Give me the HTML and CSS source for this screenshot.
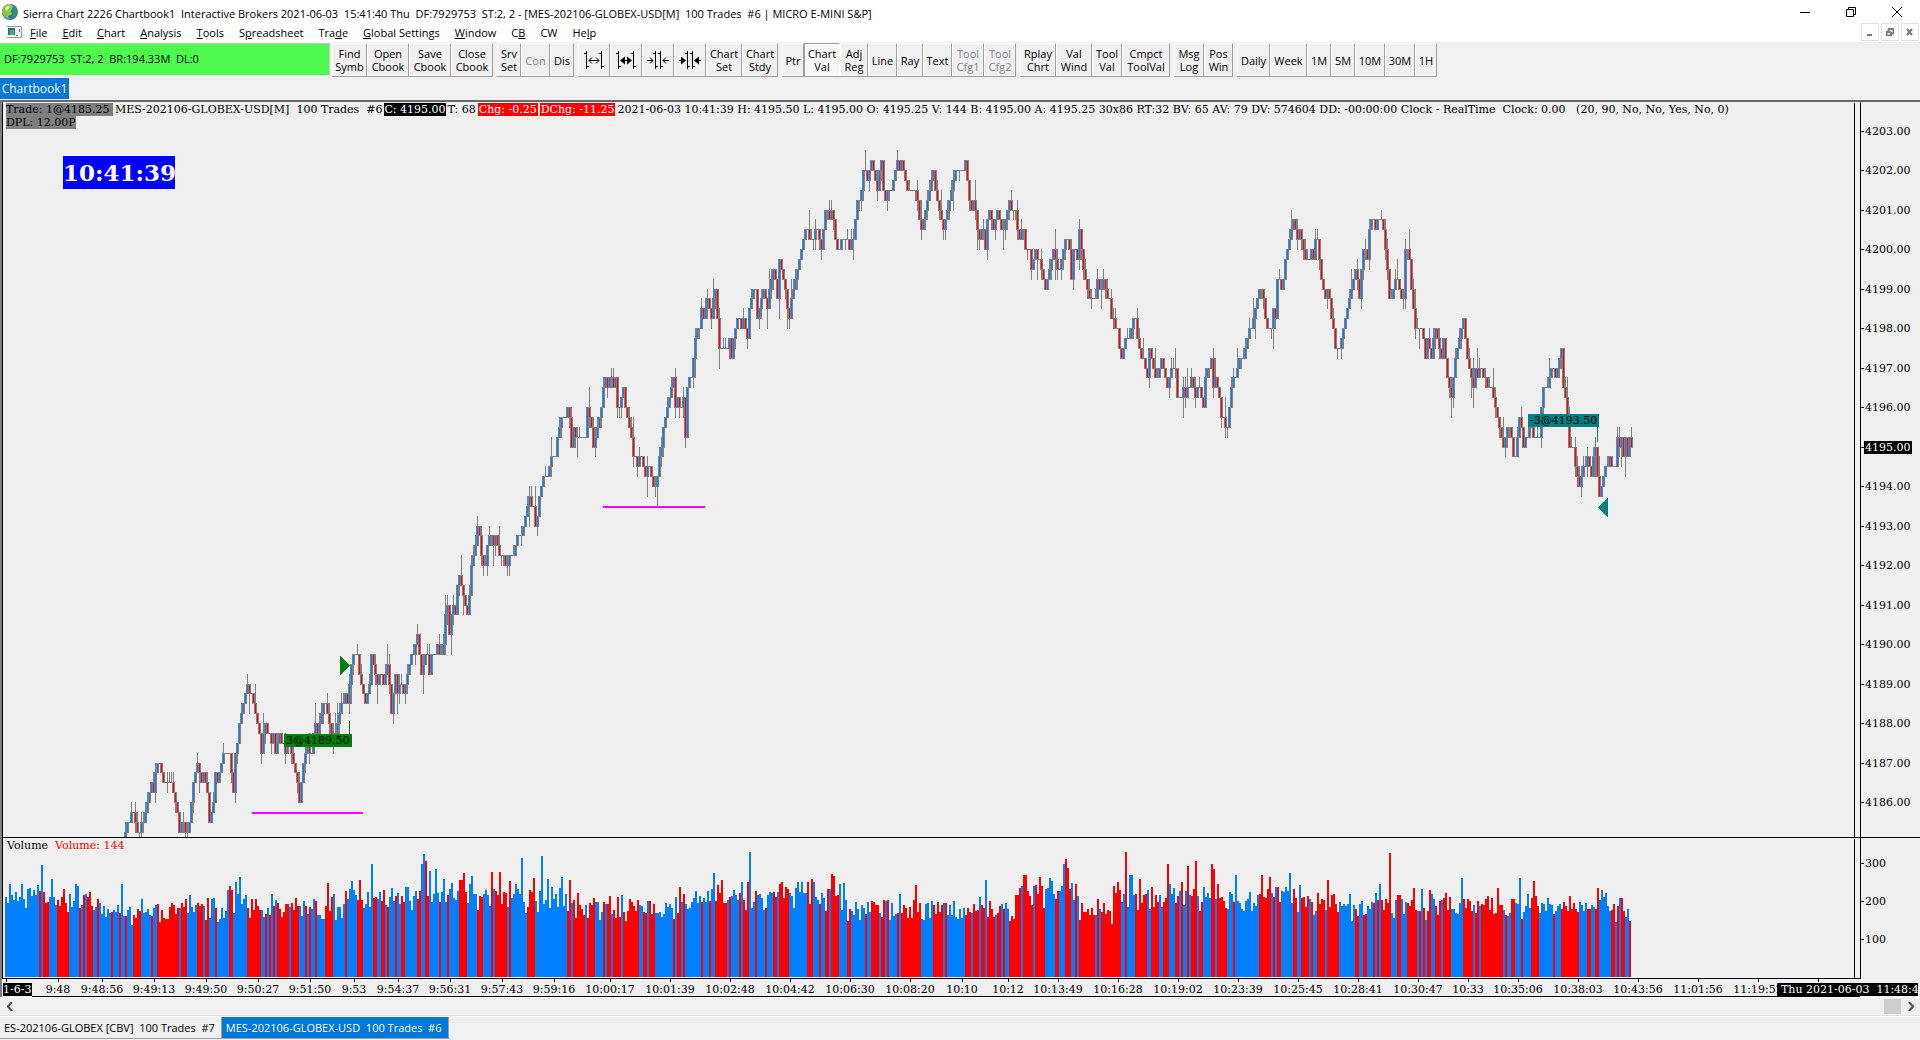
FILE: index.html
```html
<!DOCTYPE html>
<html lang="en">
<head>
  <meta charset="UTF-8" />
  <meta name="viewport" content="width=device-width, initial-scale=1.0"/>
  <title>Sierra Chart</title>
  <link rel="stylesheet" href="styles.css">
</head>
<body>
  <header class="titlebar">
    <svg class="app-icon" width="16" height="18" viewBox="0 0 16 18">
      <circle cx="8" cy="9" r="8" fill="#2d78b8"/>
      <path d="M1 6Q3 1 9 1L11 4 9 8 10 11 6 13 7 16Q1 14 0 9Z" fill="#8fc63d"/>
      <path d="M3 5Q5 2 8 3L7 6 4 8Z" fill="#e4f0a0"/>
      <path d="M12 3Q16 6 15 11L12 15 11 11 13 8Z" fill="#3c9a4b"/>
    </svg>
    <span class="title">Sierra Chart 2226 Chartbook1&nbsp; Interactive Brokers 2021-06-03&nbsp; 15:41:40 Thu&nbsp; DF:7929753&nbsp; ST:2, 2 - [MES-202106-GLOBEX-USD[M]&nbsp; 100 Trades&nbsp; #6 | MICRO E-MINI S&amp;P]</span>
    <div class="win-buttons">
      <button aria-label="Minimize"><svg width="10" height="10"><path d="M0 5.5H10"/></svg></button>
      <button aria-label="Restore"><svg width="10" height="10"><path d="M.5 2.5H7.5V9.500H.5ZM2.500 2.500V.5H9.500V7.500H7.500"/></svg></button>
      <button aria-label="Close"><svg width="10" height="10"><path d="M0 0L10 10M10 0L0 10"/></svg></button>
    </div>
  </header>

  <nav class="menubar">
    <svg class="doc-icon" width="15" height="12" viewBox="0 0 15 12">
      <path d="M0 .5H14.500V11.500H0" fill="#f4f4f4" stroke="#999"/>
      <path d="M1 2H8V9H1Z" fill="#2f6f8c"/><path d="M3 4H7V9H3Z" fill="#5fa463"/>
      <path d="M9 9.500H11M12.500 3V6" stroke="#567"/>
    </svg>
    <button><u>F</u>ile</button>
    <button><u>E</u>dit</button>
    <button><u>C</u>hart</button>
    <button><u>A</u>nalysis</button>
    <button><u>T</u>ools</button>
    <button>S<u>p</u>readsheet</button>
    <button>Tra<u>d</u>e</button>
    <button><u>G</u>lobal Settings</button>
    <button><u>W</u>indow</button>
    <button>C<u>B</u></button>
    <button>CW</button>
    <button>He<u>l</u>p</button>
    <div class="mdi-buttons">
      <button aria-label="Minimize chart"><svg width="8" height="8"><path d="M1 7H6"/></svg></button>
      <button aria-label="Restore chart"><svg width="8" height="8"><path d="M0 4H5M.5 4V7.500H5V4M2 1H8M2.500 1V3M7.500 1V5.500H6"/></svg></button>
      <button aria-label="Close chart"><svg width="8" height="8"><path d="M1 1L6 7M6 1L1 7"/></svg></button>
    </div>
  </nav>

  <div class="toolbar">
    <div class="status">DF:7929753&nbsp; ST:2, 2&nbsp; BR:194.33M&nbsp; DL:0</div>
    <div class="group group-file">
      <button>Find<br>Symb</button><button>Open<br>Cbook</button><button>Save<br>Cbook</button><button>Close<br>Cbook</button>
    </div>
    <div class="group group-server">
      <button>Srv<br>Set</button><button disabled>Con</button><button>Dis</button>
    </div>
    <div class="group group-chart">
      <button aria-label="Increase spacing"><svg width="20" height="20"><path d="M2.500 1V19M0 3.500H2M3 16.500H5M17.500 1V19M15 3.500H17M18 16.500H20M5 10.500H15M8 7.500L5 10.500 8 13.500M12 7.500L15 10.500 12 13.500"/></svg></button>
      <button aria-label="Increase bar width"><svg width="20" height="20"><path d="M2.500 1V19M0 3.500H2M3 16.500H5M17.500 1V19M15 3.500H17M18 16.500H20M5 10.500H15"/><path class="fill" d="M4 10.500L9 6.500V14.500ZM16 10.500L11 6.500V14.500Z"/></svg></button>
      <button aria-label="Decrease spacing"><svg width="22" height="20"><path d="M8.500 1V19M6 3.500H8M9 16.500H11M13.500 1V19M11 3.500H13M14 16.500H16M0 10.500H6M3 7.500L6 10.500 3 13.500M16 10.500H22M19 7.500L16 10.500 19 13.500"/></svg></button>
      <button aria-label="Decrease bar width"><svg width="22" height="20"><path d="M8.500 1V19M6 3.500H8M9 16.500H11M13.500 1V19M11 3.500H13M14 16.500H16M0 10.500H6M16 10.500H22"/><path class="fill" d="M7 10.500L2 6.500V14.500ZM15 10.500L20 6.500V14.500Z"/></svg></button>
      <button>Chart<br>Set</button><button>Chart<br>Stdy</button>
    </div>
    <div class="group group-tools">
      <button>Ptr</button><button class="pressed">Chart<br>Val</button><button>Adj<br>Reg</button><button>Line</button><button>Ray</button><button>Text</button><button disabled>Tool<br>Cfg1</button><button disabled>Tool<br>Cfg2</button>
    </div>
    <div class="group group-windows">
      <button>Rplay<br>Chrt</button><button>Val<br>Wind</button><button>Tool<br>Val</button><button>Cmpct<br>ToolVal</button>
    </div>
    <div class="group group-log">
      <button>Msg<br>Log</button><button>Pos<br>Win</button>
    </div>
    <div class="group group-period">
      <button>Daily</button><button>Week</button><button>1M</button><button>5M</button><button>10M</button><button>30M</button><button>1H</button>
    </div>
  </div>

  <div class="book-tabs"><button class="active">Chartbook1</button></div>

  <main class="chart">
    <div class="plot">
      <svg id="pricePlot"></svg>
      <div class="info">
        <span class="pos">Trade: 1@4185.25&nbsp;</span>
        <span class="symbol">MES-202106-GLOBEX-USD[M]&nbsp; 100 Trades&nbsp; #6</span>
        <span class="last">C: 4195.00</span>
        <span class="ticks">T: 68</span>
        <span class="chg">Chg: -0.25</span>
        <span class="dchg">DChg: -11.25</span>
        <span class="rest">2021-06-03 10:41:39 H: 4195.50 L: 4195.00 O: 4195.25 V: 144 B: 4195.00 A: 4195.25 30x86 RT:32 BV: 65 AV: 79 DV: 574604 DD: -00:00:00 Clock - RealTime&nbsp; Clock: 0.00&nbsp;&nbsp; (20, 90, No, No, Yes, No, 0)</span>
      </div>
      <div class="dpl">DPL: 12.00P</div>
      <div class="clock">10:41:39</div>
      <div class="fill-label buy">3@4189.50</div>
      <div class="fill-label sell">-3@4193.50</div>
    </div>
    <div class="scale"><svg id="priceScale"></svg><div class="price-now">4195.00</div></div>
    <div class="volume">
      <svg id="volumePlot"></svg>
      <div class="volume-title">Volume&nbsp; <span>Volume: 144</span></div>
    </div>
    <div class="scale volume-scale"><svg id="volumeScale"></svg></div>
    <div class="times">
      <svg id="timeScale"></svg>
      <div class="date-left">1-6-3</div>
      <div class="date-right">Thu 2021-06-03&nbsp; 11:48:4</div>
    </div>
  </main>

  <div class="scrollbar">
    <button aria-label="Scroll left"><svg width="6" height="9"><path d="M5 0L1 4.500 5 9"/></svg></button>
    <div class="track"><div class="thumb"></div></div>
    <button aria-label="Scroll right"><svg width="6" height="9"><path d="M1 0L5 4.500 1 9"/></svg></button>
  </div>

  <footer class="chart-tabs">
    <button>ES-202106-GLOBEX [CBV]&nbsp; 100 Trades&nbsp; #7</button>
    <button class="active">MES-202106-GLOBEX-USD&nbsp; 100 Trades&nbsp; #6</button>
  </footer>

  <script src="chart.js"></script>
</body>
</html>
```
FILE: styles.css
```css
* {
  box-sizing: border-box;
}

body {
  margin: 0;
  height: 100vh;
  display: flex;
  flex-direction: column;
  overflow: hidden;
  background: #f0f0f0;
  color: #000;
  font-family: "Open Sans", "Noto Sans", sans-serif;
  font-size: 12px;
}

button {
  margin: 0;
  padding: 0;
  border: 0;
  background: none;
  color: inherit;
  font: inherit;
  white-space: nowrap;
}

svg {
  display: block;
  fill: none;
  stroke: #000;
}

/* title and menu */
.titlebar {
  display: flex;
  align-items: center;
  height: 22px;
  padding: 2px 0 0 2px;
  background: #fff;
}

.app-icon,
.doc-icon {
  flex: none;
  stroke: none;
}

.title {
  margin-left: 5px;
  padding-top: 2px;
  font-size: 11px;
  white-space: nowrap;
}

.win-buttons {
  display: flex;
  margin-left: auto;
}

.win-buttons button {
  display: grid;
  place-items: center;
  width: 46px;
  height: 20px;
}

.menubar {
  display: flex;
  align-items: center;
  height: 20px;
  padding-left: 7px;
  background: #fff;
  font-size: 11px;
}

.menubar > button {
  padding: 1px 8px 0 7px;
  line-height: 19px;
}

.doc-icon {
  margin-right: 1px;
}

.mdi-buttons {
  display: flex;
  gap: 2px;
  margin-left: auto;
  padding-right: 1px;
}

.mdi-buttons button {
  display: grid;
  place-items: center;
  width: 18px;
  height: 18px;
  border: 1px solid #e3e3e3;
}

.mdi-buttons svg {
  stroke: #6f7f8f;
  stroke-width: 2;
}

/* toolbar */
.toolbar {
  display: flex;
  flex: none;
  gap: 4px;
  height: 36px;
  padding-top: 1px;
  font-size: 11px;
  line-height: 13px;
}

.status {
  width: 330px;
  height: 32px;
  margin-right: -2px;
  padding-left: 4px;
  border: 1px solid #c8c8c8;
  border-width: 1px 1px 0 0;
  background: #4dfa4d;
  line-height: 30px;
}

.group {
  display: grid;
  height: 34px;
  border-bottom: 1px solid #a0a0a0;
}

.group button {
  display: grid;
  place-content: center;
  border-top: 1px solid #fff;
  border-left: 1px solid #fff;
  border-right: 1px solid #a0a0a0;
  text-align: center;
}

.group button:disabled {
  color: #838383;
}

.group .pressed {
  border-color: #a0a0a0 #fff #fff #a0a0a0;
  background: #f8f8f8;
}

.group .fill {
  fill: #000;
  stroke: none;
}

.group-file { grid-template-columns: 35px 42px 42px 42px; }
.group-server { grid-template-columns: 24px 29px 24px; }
.group-chart { grid-template-columns: 32px 32px 32px 32px 36px 36px; }
.group-tools { grid-template-columns: 22px 36px 28px 29px 26px 29px 32px 32px; }
.group-windows { grid-template-columns: 36px 36px 30px 48px; }
.group-log { grid-template-columns: 30px 29px; }
.group-period { grid-template-columns: 33px 37px 24px 24px 30px 30px 22px; }

.book-tabs {
  height: 22px;
  flex: none;
}

.book-tabs button {
  width: 69px;
  height: 21px;
}

.active {
  background: #0078d7;
  color: #fff;
}

/* chart window */
.chart {
  flex: 1;
  min-height: 0;
  display: grid;
  grid-template-columns: 1fr 60px;
  grid-template-rows: 1fr 141px 18px;
  border-top: 2px solid #696969;
  border-left: 2px solid #808080;
  background: #efefef;
  font-family: "DejaVu Serif", serif;
  font-size: 11px;
  line-height: 13px;
  white-space: nowrap;
}

.chart svg {
  width: 100%;
  height: 100%;
  shape-rendering: crispEdges;
}

.chart svg text {
  fill: #000;
  stroke: none;
}

.plot,
.volume,
.scale,
.times {
  position: relative;
  min-width: 0;
  min-height: 0;
  overflow: hidden;
}

.plot,
.volume {
  border-left: 1px solid #000;
  border-bottom: 1px solid #000;
}

/* inner rule at the right of the plots */
.plot::after,
.volume::after {
  content: "";
  position: absolute;
  top: 1px;
  right: 5px;
  bottom: 0;
  border-right: 1px solid #000;
}

.scale {
  border-left: 1px solid #000;
  border-bottom: 1px solid #000;
}

.volume-scale {
  border-bottom: 0;
}

.info {
  position: absolute;
  top: 1px;
  left: 3px;
  display: flex;
  gap: 2px;
}

.pos,
.dpl {
  background: #808080;
}

.last {
  background: #000;
  color: #fff;
}

.chg,
.dchg {
  padding: 0 1px;
  background: #f00;
  color: #fff;
}

.dpl {
  position: absolute;
  top: 14px;
  left: 3px;
}

.clock {
  position: absolute;
  top: 54px;
  left: 60px;
  width: 112px;
  background: #00f;
  color: #fff;
  font: bold 23px/33px "DejaVu Serif", serif;
  text-align: center;
}

.fill-label {
  position: absolute;
  padding: 0 2px;
}

.buy {
  top: 632px;
  left: 281px;
  background: #008000;
}

.sell {
  top: 312px;
  left: 1525px;
  background: #008080;
}

.price-now {
  position: absolute;
  top: 339px;
  left: 3px;
  padding: 0 1px;
  background: #000;
  color: #fff;
}

.volume-title {
  position: absolute;
  top: 1px;
  left: 4px;
}

.volume-title span {
  color: #f00;
}

.times {
  grid-column: 1 / 3;
}

.date-left,
.date-right {
  position: absolute;
  top: 4px;
  overflow: hidden;
  background: #000;
  color: #fff;
}

.date-left {
  left: 1px;
  width: 29px;
}

.date-right {
  right: 2px;
  width: 141px;
  padding-left: 4px;
}

/* bottom of the window */
.scrollbar {
  display: flex;
  align-items: center;
  flex: none;
  height: 19px;
  border-top: 1px solid #fff;
  border-bottom: 1px solid #e0e0e0;
}

.scrollbar button {
  display: grid;
  place-items: center;
  width: 19px;
  height: 17px;
}

.scrollbar svg {
  stroke: #505050;
  stroke-width: 2;
}

.track {
  display: flex;
  flex: 1;
  justify-content: flex-end;
}

.thumb {
  width: 17px;
  height: 15px;
  background: #cdcdcd;
}

.chart-tabs {
  display: flex;
  flex: none;
  height: 24px;
  border-top: 1px solid #fff;
  font-size: 11px;
}

.chart-tabs button {
  height: 22px;
  padding: 0 6px 0 4px;
  border-right: 1px solid #a0a0a0;
  border-bottom: 1px solid #a0a0a0;
}
```
FILE: chart.js
```js
const NS = 'http://www.w3.org/2000/svg';
const TICK = 9.875;   // pixels per 0.25 point
const BASE_Y = 700;   // y of 4186.00

// x, close in ticks above 4186.00
const closes = `123,-4 125,-3 133,-1 136,-3 139,-3 143,-2 145,-1 149,1 151,2 153,1 155,3 158,4 160,3 164,2 170,2 172,1 176,0 178,-3 182,-2
184,-3 187,-3 189,-2 191,0 193,2 195,3 198,4 201,2 204,3 207,1 209,-2 213,0 215,3 217,2 219,3 222,5 229,5 231,3 233,1 235,5 237,6 239,8
241,9 244,11 247,12 249,11 253,10 255,9 258,8 261,5 265,8 268,7 270,6 273,7 275,5 279,7 281,6 285,5 289,6 292,4 295,3 297,2 299,0 302,3
304,4 306,6 308,5 311,5 314,8 317,7 320,8 322,9 324,10 327,9 329,8 331,6 335,7 337,8 339,9 342,10 345,11 347,10 349,12 351,14 353,15
357,15 359,13 361,12 364,10 366,10 368,11 371,15 374,14 377,12 380,13 384,12 388,14 391,9 395,13 397,11 400,13 403,11 406,12 408,14
412,15 415,16 417,17 421,13 424,14 426,16 429,13 431,15 434,15 437,16 440,15 443,16 445,19 447,20 449,17 451,19 453,20 455,19 457,22
459,23 462,21 464,20 467,19 469,21 471,24 475,26 477,28 480,26 482,24 484,23 486,25 488,26 490,27 493,26 496,27 498,25 503,25 505,24
508,24 510,25 512,24 513,25 516,26 518,27 520,27 523,28 525,29 527,30 529,31 532,30 534,29 536,27 538,30 541,32 545,33 548,33 551,35
555,35 557,37 559,38 561,39 565,39 568,40 571,36 573,38 576,37 585,37 587,40 590,39 593,36 597,38 599,39 601,40 603,42 605,43 608,42
610,43 613,42 615,43 617,40 620,40 623,42 626,39 629,38 631,37 633,35 637,34 640,35 645,33 648,34 652,32 655,32 657,33 659,35 662,37
665,39 668,41 673,43 675,40 677,41 680,39 683,41 685,37 687,42 691,43 693,45 695,47 699,48 701,50 703,49 706,51 711,49 713,51 715,52
717,49 719,46 727,46 729,47 731,45 734,48 738,49 742,48 744,49 747,47 750,51 755,52 757,49 761,51 763,52 767,50 769,52 773,54 777,51
779,55 782,53 785,52 787,50 789,49 792,52 795,53 797,54 799,55 802,56 805,58 809,57 813,57 816,58 821,56 825,60 829,59 831,60 834,58
837,56 840,56 842,57 848,57 849,56 853,57 855,59 857,61 859,61 861,62 863,64 867,63 871,65 873,64 875,63 877,62 881,65 884,61 888,62
890,61 893,63 896,65 900,64 902,65 904,63 909,62 916,62 918,59 921,58 926,60 930,63 933,64 935,62 938,61 943,58 946,60 949,61 952,62
956,64 962,64 965,65 968,62 971,60 974,61 977,58 980,57 982,59 985,56 988,60 992,58 997,60 1002,58 1005,59 1009,61 1012,60 1015,60
1018,57 1023,58 1025,56 1029,56 1031,54 1035,56 1041,54 1045,52 1048,54 1054,56 1058,53 1062,55 1065,57 1069,56 1071,53 1073,56
1077,55 1079,58 1082,55 1086,52 1088,51 1096,51 1097,53 1100,51 1103,53 1106,51 1110,51 1111,49 1117,48 1119,46 1122,45 1126,48
1128,46 1131,48 1134,50 1137,47 1142,45 1147,43 1149,46 1152,44 1157,43 1161,45 1166,42 1171,44 1175,44 1177,41 1180,41 1183,42
1185,41 1188,42 1191,43 1195,41 1198,42 1203,40 1205,43 1211,45 1213,42 1216,43 1219,41 1221,39 1225,38 1227,38 1229,40 1232,43
1236,43 1240,45 1244,45 1247,47 1250,48 1254,49 1257,51 1260,52 1264,50 1267,48 1272,48 1273,50 1275,49 1277,53 1281,52 1283,53
1286,56 1290,57 1293,59 1296,57 1300,58 1304,55 1309,55 1311,56 1313,55 1315,57 1318,57 1320,53 1324,51 1327,52 1330,50 1335,46
1339,46 1341,47 1344,49 1347,50 1352,53 1355,54 1359,51 1363,56 1367,55 1368,57 1372,59 1375,58 1378,59 1381,59 1385,56 1389,51
1392,51 1396,54 1400,51 1403,51 1405,56 1409,55 1411,52 1415,48 1422,48 1425,45 1427,47 1431,45 1434,48 1437,47 1441,45 1443,47
1446,44 1451,41 1454,44 1459,47 1463,49 1467,45 1469,44 1473,42 1475,44 1477,43 1481,44 1484,43 1488,42 1492,42 1495,40 1500,38
1503,36 1506,38 1510,38 1513,35 1515,35 1519,39 1523,36 1526,37 1530,38 1535,37 1539,37 1541,40 1543,42 1547,42 1549,43 1553,44
1556,43 1561,46 1563,42 1566,41 1567,39 1569,36 1573,36 1574,34 1578,32 1580,32 1584,34 1587,35 1591,33 1595,36 1597,33 1599,31
1603,33 1607,34 1609,35 1612,34 1616,34 1617,37 1619,36 1621,37 1623,35 1625,37 1627,35 1629,37 1631,36`
  .split(/\s+/).map(p => p.split(',').map(Number));

// lengths of up / down runs in the volume study, first run is up
const runs = `17 1 1 3 4 6 5 1 1 1 1 3 2 1 6 1 3 1 2 1 3 4 5 1 2 11 1 3 5 3 1 2 3 1 6 2 7 7 2 1 1 1 1 1 1 6 1 4 3 1 1 1 2 1 4 4 6 1 5 3 5 2 2 2
1 1 3 1 2 2 6 2 2 2 5 1 3 1 5 4 5 3 4 1 1 6 1 1 8 4 16 2 1 6 1 4 4 1 1 2 1 4 1 8 2 2 1 3 9 1 1 2 1 1 8 1 3 1 2 6 1 1 4 1 1 3 3 1 4 1 3 2 1
5 9 3 3 1 2 2 1 4 4 2 7 1 2 4 1 2 1 1 4 1 1 10 6 5 1 1 9 3 1 3 1 2 1 4 1 2 1 1 2 6 1 5 1 5 5 2 3 3 2 1 1 8 1 1 1 10 2 1 4 6 2 4 2 3 3 2 1
1 2 1 1 3 1 2 4 2 1 5 3 1 12 6 1 1 1 2 6 2 2 4 1 1 2 4 1 6 8 2 2 2 3 1 1 1 1 5 3 2 3 5 1 1 1 1 1 2 2 3 1 4 6 5 1 2 1 11 1 1 2 2 3 1 4 4 7
1 3 9 4 2 2 2 6 2 1 1 1 2 2 2`.split(/\s+/).map(Number);

// average volume from x on
const levels = [[5, 205], [100, 170], [180, 178], [225, 205], [248, 180], [345, 210], [420, 215], [480, 210], [560, 190], [610, 180],
  [690, 215], [840, 180], [960, 178], [1015, 222], [1078, 172], [1112, 208], [1310, 188]];

const spikes = { 41: 295, 51: 258, 63: 232, 77: 240, 121: 245, 235: 251, 239: 262, 327: 247, 351: 253, 359: 255, 371: 297, 421: 297,
  423: 324, 425: 305, 429: 278, 435: 284, 443: 258, 459: 255, 461: 255, 463: 274, 471: 266, 491: 275, 499: 275, 521: 313, 533: 260,
  541: 319, 547: 257, 561: 262, 569: 256, 679: 236, 713: 274, 721: 255, 741: 250, 747: 250, 749: 330, 781: 250, 797: 250, 801: 250,
  807: 250, 831: 271, 833: 265, 843: 248, 915: 242, 985: 255, 1023: 269, 1025: 269, 1039: 263, 1051: 252, 1063: 297, 1065: 310,
  1067: 287, 1117: 250, 1125: 330, 1129: 269, 1131: 269, 1139: 258, 1167: 297, 1181: 250, 1187: 291, 1195: 305, 1211: 297, 1213: 284,
  1235: 269, 1261: 269, 1269: 263, 1289: 274, 1299: 242, 1327: 255, 1379: 245, 1389: 326, 1413: 234, 1421: 232, 1429: 230, 1461: 260,
  1497: 234, 1519: 260, 1533: 252, 1597: 234, 1605: 221, 1629: 148 };

const times = [[58, '9:48'], [102, '9:48:56'], [154, '9:49:13'], [206, '9:49:50'], [258, '9:50:27'], [310, '9:51:50'], [354, '9:53'],
  [398, '9:54:37'], [450, '9:56:31'], [502, '9:57:43'], [554, '9:59:16'], [610, '10:00:17'], [670, '10:01:39'], [730, '10:02:48'],
  [790, '10:04:42'], [850, '10:06:30'], [910, '10:08:20'], [962, '10:10'], [1008, '10:12'], [1058, '10:13:49'], [1118, '10:16:28'],
  [1178, '10:19:02'], [1238, '10:23:39'], [1298, '10:25:45'], [1358, '10:28:41'], [1418, '10:30:47'], [1468, '10:33'],
  [1518, '10:35:06'], [1578, '10:38:03'], [1638, '10:43:56'], [1698, '11:01:56'], [1758, '11:19:52'], [1818, '']];

function add(parent, tag, attrs, text) {
  const el = document.createElementNS(NS, tag);
  for (const k in attrs) el.setAttribute(k, attrs[k]);
  if (text) el.textContent = text;
  parent.appendChild(el);
}

function noise(n) {
  const v = Math.sin(n * 12.9898) * 43758.5453;
  return v - Math.floor(v);
}

function wick(n) {
  const v = noise(n);
  return v > 0.95 ? 2 : v > 0.65 ? 1 : 0;
}

const box = (x, y, w, h) => `M${x} ${y}h${w}v${h}h${-w}z`;

function drawPrice() {
  const svg = document.getElementById('pricePlot');
  let grey = '', up = '', down = '';
  let seg = 0;
  let open = closes[0][1];
  for (let x = 125; x <= 1631; x += 2) {
    while (closes[seg + 1][0] < x) seg++;
    const [x0, t0] = closes[seg];
    const [x1, t1] = closes[seg + 1];
    const close = Math.round(t0 + (t1 - t0) * (x - x0) / (x1 - x0));
    const hi = Math.min(66, Math.max(open, close) + wick(x));
    const lo = Math.min(open, close) - wick(x + 7000);
    const left = x - 4;
    const top = Math.round(BASE_Y - Math.max(open, close) * TICK);
    const bottom = Math.round(BASE_Y - Math.min(open, close) * TICK);
    const wickTop = Math.round(BASE_Y - hi * TICK);
    const wickBottom = Math.round(BASE_Y - lo * TICK);
    grey += box(left, top, 3, bottom - top + 1);
    grey += box(left + 1, wickTop, 1, wickBottom - wickTop + 1);
    if (close > open) up += box(left + 1, top + 1, 1, bottom - top - 1);
    if (close < open) down += box(left + 1, top + 1, 1, bottom - top - 1);
    open = close;
  }
  add(svg, 'path', { d: grey, fill: '#808080', stroke: 'none' });
  add(svg, 'path', { d: up, fill: '#0080ff', stroke: 'none' });
  add(svg, 'path', { d: down, fill: '#ff0000', stroke: 'none' });

  add(svg, 'path', { d: box(249, 710, 111, 2) + box(600, 404, 102, 2), fill: '#ff00ff', stroke: 'none' });
  add(svg, 'path', { d: 'M337 554L347 563.5 337 573z' + box(346, 619, 1, 14), fill: '#008000', stroke: 'none' });
  add(svg, 'path', { d: 'M1605 396L1595 405.5 1605 415z' + box(1594, 325, 1, 15), fill: '#008080', stroke: 'none' });
}

function drawVolume() {
  const svg = document.getElementById('volumePlot');
  const paths = ['', ''];
  let x = 5;
  runs.forEach((count, r) => {
    for (let i = 0; i < count && x < 1631; i++, x += 2) {
      const level = levels.filter(l => l[0] <= x).pop()[1];
      const v = spikes[x] || level + (noise(x + 300) + noise(x + 900) - 1) * 45;
      const h = Math.round(v * 0.38);
      paths[r % 2] += box(x - 3, 139 - h, 2, h);
    }
  });
  add(svg, 'path', { d: paths[0], fill: '#0080ff', stroke: 'none' });
  add(svg, 'path', { d: paths[1], fill: '#ff0000', stroke: 'none' });
}

function drawScales() {
  const price = document.getElementById('priceScale');
  for (let p = 4203; p >= 4186; p--) {
    const y = Math.round(BASE_Y - (p - 4186) * 4 * TICK);
    add(price, 'path', { d: `M0 ${y}.5h3` });
    add(price, 'text', { x: 4, y: y + 4 }, p.toFixed(2));
  }
  const volume = document.getElementById('volumeScale');
  for (const v of [300, 200, 100]) {
    const y = 139 - v * 0.38;
    add(volume, 'path', { d: `M0 ${y + 0.5}h3` });
    add(volume, 'text', { x: 4, y: y + 4 }, v);
  }
  const time = document.getElementById('timeScale');
  add(time, 'path', { d: 'M30 17.500H1858M4.500 0v3' });
  for (const [x, label] of times) {
    add(time, 'path', { d: `M${x - 1.5} 0v3` });
    add(time, 'text', { x: x - 2, y: 14, 'text-anchor': 'middle' }, label);
  }
}

drawPrice();
drawVolume();
drawScales();
```
